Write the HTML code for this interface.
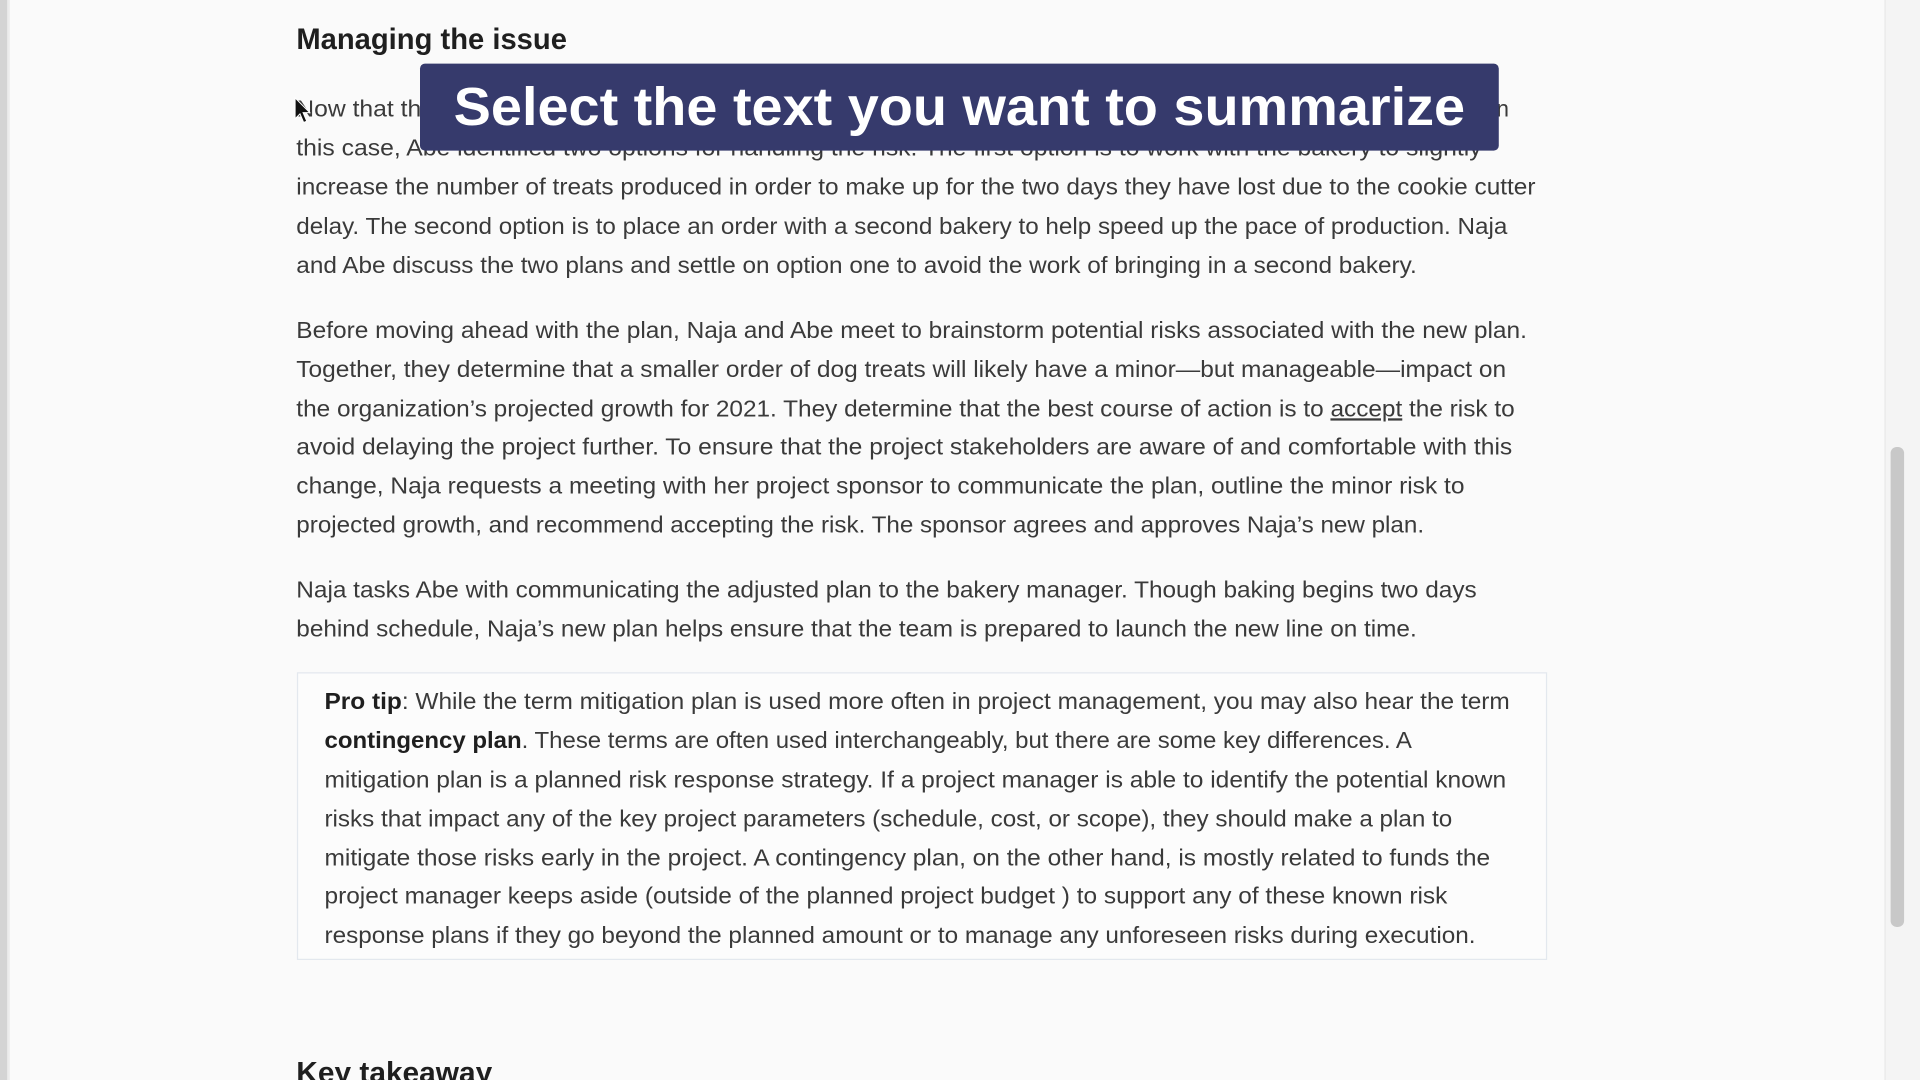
<!DOCTYPE html>
<html><head><meta charset="utf-8"><style>
html,body{margin:0;padding:0;width:1920px;height:1080px;overflow:hidden;background:#fafafa}
svg{display:block}
text{font-family:"Liberation Sans",sans-serif;fill:#3a3a3a;font-size:18.5px}
.b{font-weight:bold;fill:#1f1f1f}
</style></head><body>
<svg width="1920" height="1080" viewBox="0 0 1568 882" xmlns="http://www.w3.org/2000/svg">
<rect x="0" y="0" width="1568" height="882" fill="#fafafa"/>
<rect x="0" y="0" width="6" height="882" fill="#d4d4d4"/>
<rect x="6" y="0" width="2" height="882" fill="#ececec"/>
<rect x="1539" y="0" width="1" height="882" fill="#e6e6e6"/>
<rect x="1540" y="0" width="28" height="882" fill="#f4f4f4"/>
<rect x="1544" y="365" width="11" height="392" rx="5" fill="#c8c8c8"/>

<text x="242" y="40" class="b" style="font-size:24px" textLength="221" lengthAdjust="spacingAndGlyphs">Managing the issue</text>

<text x="242" y="95" textLength="102" lengthAdjust="spacingAndGlyphs">Now that th</text>
<text x="1222" y="95">n</text>
<text x="242" y="127" textLength="968" lengthAdjust="spacingAndGlyphs">this case, Abe identified two options for handling the risk. The first option is to work with the bakery to slightly</text>
<text x="242" y="159" textLength="1012" lengthAdjust="spacingAndGlyphs">increase the number of treats produced in order to make up for the two days they have lost due to the cookie cutter</text>
<text x="242" y="191" textLength="989" lengthAdjust="spacingAndGlyphs">delay. The second option is to place an order with a second bakery to help speed up the pace of production. Naja</text>
<text x="242" y="223" textLength="915" lengthAdjust="spacingAndGlyphs">and Abe discuss the two plans and settle on option one to avoid the work of bringing in a second bakery.</text>

<text x="242" y="276" textLength="1005" lengthAdjust="spacingAndGlyphs">Before moving ahead with the plan, Naja and Abe meet to brainstorm potential risks associated with the new plan.</text>
<text x="242" y="308" textLength="988" lengthAdjust="spacingAndGlyphs">Together, they determine that a smaller order of dog treats will likely have a minor—but manageable—impact on</text>
<text x="242" y="340" textLength="995" lengthAdjust="spacingAndGlyphs">the organization’s projected growth for 2021. They determine that the best course of action is to <tspan style="text-decoration:underline">accept</tspan> the risk to</text>
<text x="242" y="371" textLength="993" lengthAdjust="spacingAndGlyphs">avoid delaying the project further. To ensure that the project stakeholders are aware of and comfortable with this</text>
<text x="242" y="403" textLength="954" lengthAdjust="spacingAndGlyphs">change, Naja requests a meeting with her project sponsor to communicate the plan, outline the minor risk to</text>
<text x="242" y="435" textLength="921" lengthAdjust="spacingAndGlyphs">projected growth, and recommend accepting the risk. The sponsor agrees and approves Naja’s new plan.</text>

<text x="242" y="488" textLength="964" lengthAdjust="spacingAndGlyphs">Naja tasks Abe with communicating the adjusted plan to the bakery manager. Though baking begins two days</text>
<text x="242" y="520" textLength="915" lengthAdjust="spacingAndGlyphs">behind schedule, Naja’s new plan helps ensure that the team is prepared to launch the new line on time.</text>

<rect x="243" y="549.5" width="1020" height="234" fill="#fcfcfc" stroke="#e3e8ee" stroke-width="1"/>
<text x="265" y="579" textLength="968" lengthAdjust="spacingAndGlyphs"><tspan class="b">Pro tip</tspan>: While the term mitigation plan is used more often in project management, you may also hear the term</text>
<text x="265" y="611" textLength="888" lengthAdjust="spacingAndGlyphs"><tspan class="b">contingency plan</tspan>. These terms are often used interchangeably, but there are some key differences. A</text>
<text x="265" y="643" textLength="965" lengthAdjust="spacingAndGlyphs">mitigation plan is a planned risk response strategy. If a project manager is able to identify the potential known</text>
<text x="265" y="675" textLength="921" lengthAdjust="spacingAndGlyphs">risks that impact any of the key project parameters (schedule, cost, or scope), they should make a plan to</text>
<text x="265" y="707" textLength="952" lengthAdjust="spacingAndGlyphs">mitigate those risks early in the project. A contingency plan, on the other hand, is mostly related to funds the</text>
<text x="265" y="738" textLength="917" lengthAdjust="spacingAndGlyphs">project manager keeps aside (outside of the planned project budget ) to support any of these known risk</text>
<text x="265" y="770" textLength="940" lengthAdjust="spacingAndGlyphs">response plans if they go beyond the planned amount or to manage any unforeseen risks during execution.</text>

<text x="242" y="884" class="b" style="font-size:24px" textLength="160" lengthAdjust="spacingAndGlyphs">Key takeaway</text>

<rect x="343" y="52" width="881" height="71" rx="4" fill="#363a6c"/>
<text x="783.5" y="102" text-anchor="middle" style="font-size:44px;font-weight:bold;fill:#ffffff" textLength="826" lengthAdjust="spacingAndGlyphs">Select the text you want to summarize</text>

<path d="M241 80 L241 97 L245 93 L248 100 L250.5 99 L247.5 92 L253 92 Z" fill="#111" stroke="#fff" stroke-width="0.8"/>
</svg>
</body></html>
